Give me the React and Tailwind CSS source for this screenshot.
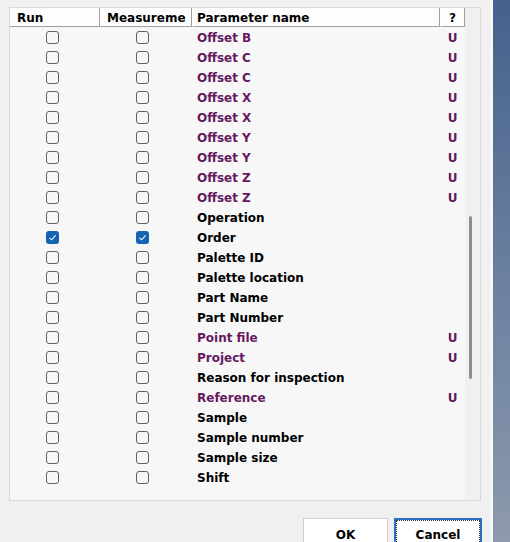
import React from "react";

const rows = [
  ["Offset B", true, false],
  ["Offset C", true, false],
  ["Offset C", true, false],
  ["Offset X", true, false],
  ["Offset X", true, false],
  ["Offset Y", true, false],
  ["Offset Y", true, false],
  ["Offset Z", true, false],
  ["Offset Z", true, false],
  ["Operation", false, false],
  ["Order", false, true],
  ["Palette ID", false, false],
  ["Palette location", false, false],
  ["Part Name", false, false],
  ["Part Number", false, false],
  ["Point file", true, false],
  ["Project", true, false],
  ["Reason for inspection", false, false],
  ["Reference", true, false],
  ["Sample", false, false],
  ["Sample number", false, false],
  ["Sample size", false, false],
  ["Shift", false, false],
];

function Box({ checked }) {
  if (checked) {
    return (
      <div className="w-[13px] h-[13px] rounded-[3px] bg-[#1464b4] flex items-center justify-center">
        <svg width="9" height="9" viewBox="0 0 9 9">
          <path d="M1.5 4.8 L3.6 6.8 L7.6 2.4" fill="none" stroke="#ffffff" strokeWidth="1.1" />
        </svg>
      </div>
    );
  }
  return <div className="w-[13px] h-[13px] rounded-[3px] border border-[#616161] bg-[#f7f7f7]" />;
}

export default function App() {
  const font = { fontFamily: '"DejaVu Sans", sans-serif' };
  return (
    <div className="w-[510px] h-[542px] flex overflow-hidden" style={font}>
      <div className="w-[493px] h-full bg-[#f0f0f0] border-r-[3px] border-[#f7f7f7] flex flex-col pt-[7px] pl-[9px]">
        <div className="w-[472px] h-[494px] shrink-0 border border-[#dadada] bg-[#f7f7f7] flex">
          <div className="w-[455px] flex flex-col">
            <div className="flex h-[19px] text-[12px] font-bold text-black leading-none">
              <div className="w-[90px] bg-[#fdfdfd] border-r border-b border-[#a0a0a0] flex items-center pl-[7px] pt-[2px]">Run</div>
              <div className="w-[92px] bg-[#fdfdfd] border-r border-b border-[#a0a0a0] border-l border-l-white flex items-center pl-[6px] pt-[2px] overflow-hidden whitespace-nowrap">Measureme</div>
              <div className="w-[248px] bg-[#fdfdfd] border-r border-b border-[#a0a0a0] border-l border-l-white flex items-center pl-[4px] pt-[2px]">Parameter name</div>
              <div className="w-[25px] bg-[#fdfdfd] border-r border-b border-[#a0a0a0] border-l border-l-white flex items-center justify-center pt-[2px]">?</div>
            </div>
            <div className="flex flex-col">
              {rows.map(([name, purple, checked], i) => (
                <div key={i} className="flex h-[20px] items-center text-[12px] font-bold leading-none">
                  <div className="w-[90px] flex pl-[36px]">
                    <Box checked={checked} />
                  </div>
                  <div className="w-[92px] flex pl-[36px]">
                    <Box checked={checked} />
                  </div>
                  <div className={"w-[248px] pl-[5px] pt-[2px] " + (purple ? "text-[#66185f]" : "text-black")}>{name}</div>
                  <div className="w-[25px] flex justify-center pt-[2px] text-[#66185f]">{purple ? "U" : ""}</div>
                </div>
              ))}
            </div>
          </div>
          <div className="w-[15px] bg-[#f0f0f0] flex flex-col">
            <div className="h-[208px]" />
            <div className="ml-[4px] w-[3px] h-[163px] bg-[#8c8c8c] rounded-full" />
          </div>
        </div>
        <div className="flex gap-[6px] mt-[17px] ml-[294px] shrink-0">
          <div className="w-[85px] h-[30px] bg-white border border-[#d0d0d0] flex items-start pt-[7px] justify-center text-[12px] font-bold text-black">OK</div>
          <div className="w-[88px] h-[30px] bg-white border-2 border-[#2a6fc0] flex text-[12px] font-bold text-black">
            <div className="w-full h-full border border-dotted border-[#333] flex items-start pt-[5px] justify-center">Cancel</div>
          </div>
        </div>
      </div>
      <div className="flex-1 h-full bg-gradient-to-b from-[#46618c] via-[#6a7f9f] to-[#8d99ad]" />
    </div>
  );
}
